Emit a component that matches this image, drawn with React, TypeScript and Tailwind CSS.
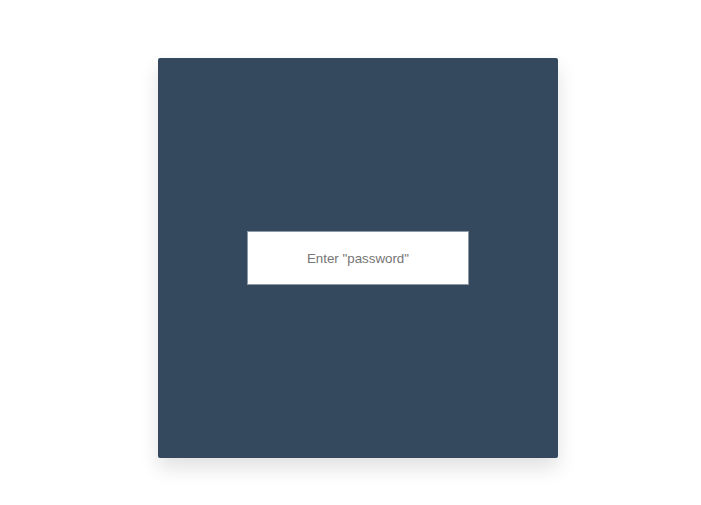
export default function App() {
	return (
		<div className="min-h-[505px] w-full bg-white pt-[58px] pl-[158px]">
			{/* panel */}
			<div className="w-[400px] h-[400px] rounded-[2px] bg-[#34495e] shadow-[0_10px_20px_rgba(0,0,0,0.12)] flex items-center justify-center">
				<input
					type="password"
					placeholder={'Enter "password"'}
					className="w-[222px] h-[54px] bg-white border border-[#8e99a5] text-center text-[13.333px] text-[#333] placeholder:text-[#757575] outline-none"
					style={{ fontFamily: '"Liberation Sans", Arial, sans-serif' }}
				/>
			</div>
		</div>
	);
}
